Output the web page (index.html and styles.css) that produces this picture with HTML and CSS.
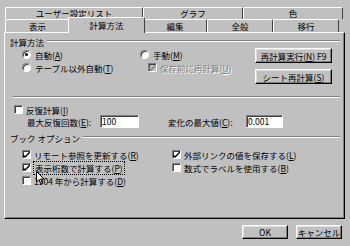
FILE: index.html
```html
<!DOCTYPE html>
<html lang="ja">
<head>
    <meta charset="UTF-8">
    <title>オプション</title>
    <link rel="stylesheet" href="styles.css">
</head>
<body>
<div class="dialog">
    <div class="tab-row tab-row-back">
        <div class="tab" style="width:138px">ユーザー設定リスト</div>
        <div class="tab" style="width:100px">グラフ</div>
        <div class="tab" style="width:100px">色</div>
    </div>
    <div class="tab-row tab-row-front">
        <div class="tab" style="width:65px">表示</div>
        <div class="tab tab-active" style="width:77px">計算方法</div>
        <div class="tab" style="width:64px">編集</div>
        <div class="tab" style="width:66px">全般</div>
        <div class="tab" style="width:66px">移行</div>
    </div>

    <div class="panel">
        <!-- 計算方法 -->
        <div class="group-title"><span>計算方法</span><i class="rule"></i></div>
        <div class="calc">
            <div class="calc-options">
                <label class="opt"><span class="radio checked"></span>自動(<u>A</u>)</label>
                <label class="opt"><span class="radio"></span>手動(<u>M</u>)</label>
                <label class="opt"><span class="radio"></span>テーブル以外自動(<u>T</u>)</label>
                <label class="opt opt-sub disabled"><span class="check"><svg width="7" height="7" viewBox="0 0 7 7"><path d="M0 3 L2 5 L7 0 L7 2 L2 7 L0 5 Z" fill="#808080"/></svg></span>保存前に再計算(<u>U</u>)</label>
            </div>
            <div class="calc-buttons">
                <button class="btn">再計算実行(<u>N</u>) F9</button>
                <button class="btn">シート再計算(<u>S</u>)</button>
            </div>
        </div>

        <div class="sep"></div>

        <!-- 反復計算 -->
        <label class="opt iter"><span class="check"></span>反復計算(<u>I</u>)</label>
        <div class="iter-fields">
            <span class="field-label">最大反復回数(<u>E</u>):</span>
            <span class="input input-max">100</span>
            <span class="field-label field-label-2">変化の最大値(<u>C</u>):</span>
            <span class="input input-change">0.001</span>
        </div>

        <!-- ブック オプション -->
        <div class="group-title group-title-book"><span>ブック オプション</span><i class="rule"></i></div>
        <div class="book">
            <label class="opt"><span class="check"><svg width="7" height="7" viewBox="0 0 7 7"><path d="M0 3 L2 5 L7 0 L7 2 L2 7 L0 5 Z" fill="#000"/></svg></span>リモート参照を更新する(<u>R</u>)</label>
            <label class="opt"><span class="check"><svg width="7" height="7" viewBox="0 0 7 7"><path d="M0 3 L2 5 L7 0 L7 2 L2 7 L0 5 Z" fill="#000"/></svg></span>外部リンクの値を保存する(<u>L</u>)</label>
            <label class="opt"><span class="check"><svg width="7" height="7" viewBox="0 0 7 7"><path d="M0 3 L2 5 L7 0 L7 2 L2 7 L0 5 Z" fill="#000"/></svg></span><span class="focus">表示桁数で計算する(<u>P</u>)</span></label>
            <label class="opt"><span class="check"></span>数式でラベルを使用する(<u>B</u>)</label>
            <label class="opt"><span class="check"></span>1904 年から計算する(<u>D</u>)</label>
        </div>
    </div>

    <div class="footer">
        <button class="btn btn-footer">OK</button>
        <button class="btn btn-footer">キャンセル</button>
    </div>

    <!-- マウスカーソル -->
    <svg class="cursor" width="9" height="14" viewBox="0 0 9 14">
        <path d="M0.5 0.5 L0.5 11 L3 8.5 L5 13 L6.5 12.3 L4.6 8 L8 8 Z" fill="#fff" stroke="#000" stroke-width="1"/>
    </svg>
</div>
</body>
</html>
```

FILE: styles.css
```css
/* Estilos generales */
* {
    box-sizing: border-box;
}

body {
    margin: 0;
    width: 350px;
    height: 246px;
    overflow: hidden;
    background-color: #c0c0c0;
    font-family: "Noto Sans CJK JP", sans-serif;
    font-size: 8.5px;
    color: #000;
}

u {
    text-decoration: underline;
}

.dialog {
    position: relative;
    padding: 7px 5px 0 4px;
}

/* Pestañas */
.tab-row {
    display: flex;
    margin-left: 1px;
}

.tab {
    height: 12px;
    line-height: 11px;
    text-align: center;
    background-color: #c0c0c0;
    border-top: 1px solid #fff;
    border-left: 1px solid #fff;
    border-right: 1px solid #404040;
    border-radius: 2px 2px 0 0;
}

.tab-row-front .tab {
    height: 13px;
    line-height: 12px;
}

.tab-row-front .tab-active {
    position: relative;
    z-index: 1;
    height: 16px;
    margin: -2px -2px -1px;
    padding: 0 2px;
    line-height: 14px;
}

/* Panel */
.panel {
    height: 187px;
    background-color: #c0c0c0;
    border-top: 1px solid #fff;
    border-left: 1px solid #fff;
    border-right: 1px solid #000;
    border-bottom: 1px solid #000;
    box-shadow: inset -1px -1px #808080;
}

.group-title {
    display: flex;
    align-items: center;
    height: 11px;
    margin-top: 3px;
    padding-left: 5px;
    padding-right: 4px;
}

.rule {
    flex: 1;
    height: 2px;
    margin-left: 3px;
    margin-top: -1px;
    border-top: 1px solid #808080;
    border-bottom: 1px solid #fff;
}

.group-title-book {
    margin-top: 4px;
}

.opt {
    display: flex;
    align-items: center;
    height: 13px;
    white-space: nowrap;
}

.radio {
    position: relative;
    width: 9px;
    height: 9px;
    margin-right: 4px;
    border-radius: 50%;
    background-color: #fff;
    border: 1px solid;
    border-color: #808080 #fff #fff #808080;
    box-shadow: inset 1px 1px #404040;
}

.radio.checked::after {
    content: "";
    position: absolute;
    left: 2px;
    top: 2px;
    width: 3px;
    height: 3px;
    border-radius: 50%;
    background-color: #000;
}

.check {
    display: flex;
    align-items: center;
    justify-content: center;
    width: 9px;
    height: 9px;
    margin-right: 3px;
    background-color: #fff;
    border: 1px solid;
    border-color: #808080 #fff #fff #808080;
    box-shadow: inset 1px 1px #404040;
}

.disabled {
    color: #808080;
    text-shadow: 1px 1px #fff;
}

.disabled .check {
    background-color: #c0c0c0;
}

/* Calculo */
.calc {
    display: flex;
    margin-top: 1px;
}

.calc-options {
    display: grid;
    grid-template-columns: 118px auto;
    grid-auto-rows: 13px;
    padding-left: 17px;
}

.opt-sub {
    padding-left: 8px;
}

.calc-buttons {
    display: flex;
    flex-direction: column;
    gap: 6px;
    margin-left: auto;
    margin-right: 12px;
}

.btn {
    width: 77px;
    height: 15px;
    padding: 0;
    font-family: inherit;
    font-size: inherit;
    color: #000;
    background-color: #c0c0c0;
    border: 1px solid;
    border-color: #fff #000 #000 #fff;
    box-shadow: inset -1px -1px #808080, inset 1px 1px #dfdfdf;
    white-space: nowrap;
}

.sep {
    height: 2px;
    margin: 12px 4px 0 8px;
    border-top: 1px solid #808080;
    border-bottom: 1px solid #fff;
}

/* Iteracion */
.iter {
    height: 11px;
    margin-top: 6px;
    padding-left: 9px;
}

.iter-fields {
    display: flex;
    align-items: center;
    height: 13px;
    padding-left: 22px;
}

.field-label {
    width: 73px;
    white-space: nowrap;
}

.field-label-2 {
    width: 78px;
    margin-left: 29px;
}

.input {
    height: 13px;
    line-height: 11px;
    padding-left: 1px;
    background-color: #fff;
    border: 1px solid;
    border-color: #808080 #fff #fff #808080;
    box-shadow: inset 1px 1px #404040;
}

.input-max {
    width: 39px;
}

.input-change {
    width: 37px;
}

/* Libro */
.book {
    display: grid;
    grid-template-columns: 150px auto;
    grid-auto-rows: 13px;
    margin-top: 5px;
    padding-left: 17px;
}

.focus {
    outline: 1px dotted #000;
    outline-offset: 0;
    padding: 0 1px;
}

/* Pie */
.footer {
    display: flex;
    justify-content: flex-end;
    gap: 8px;
    margin-top: 6px;
    padding-right: 3px;
}

.btn-footer {
    width: 46px;
    height: 14px;
}

.cursor {
    position: absolute;
    left: 36px;
    top: 171px;
}
```
